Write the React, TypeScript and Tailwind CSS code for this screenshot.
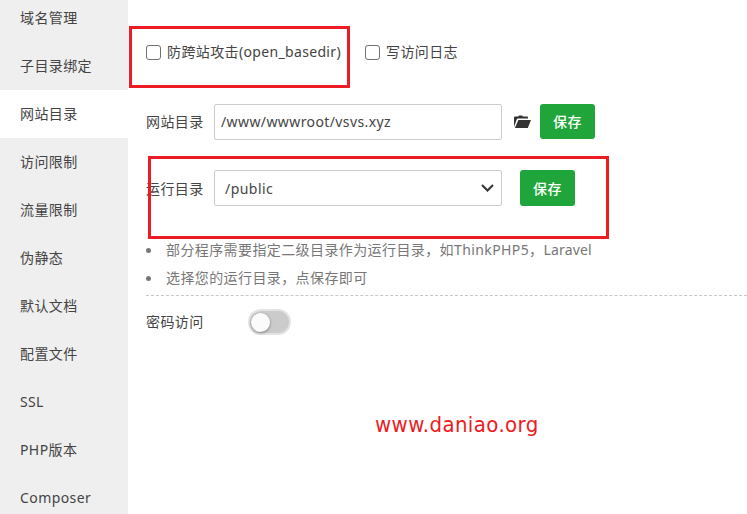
import React from 'react';

const menu: [string, string][] = [
  ['域名管理', ''],
  ['子目录绑定', ''],
  ['网站目录', ''],
  ['访问限制', ''],
  ['流量限制', ''],
  ['伪静态', ''],
  ['默认文档', ''],
  ['配置文件', ''],
  ['SSL', 'tracking-[0.3px]'],
  ['PHP版本', 'tracking-[0.4px]'],
  ['Composer', 'tracking-[0.42px]'],
];

function Sidebar() {
  return (
    <nav className="-mt-[6px] flex w-32 shrink-0 flex-col bg-[#efefef]">
      {menu.map(([label, tracking]) => (
        <a
          key={label}
          className={`flex h-12 shrink-0 items-center pl-5 ${label === '网站目录' ? 'bg-white' : ''}`}
        >
          <span className={tracking}>{label}</span>
        </a>
      ))}
    </nav>
  );
}

function Checkbox() {
  return <span className="size-[15px] shrink-0 rounded-[3px] border border-[#707070] bg-white" />;
}

function SaveButton({ height }: { height: string }) {
  return (
    <button className={`block w-[55px] rounded-[3px] bg-[#20a53a] font-medium text-white ${height}`}>保存</button>
  );
}

function Toggle() {
  return (
    <span className="ml-[44px] flex h-[26px] w-[43px] items-center rounded-full border-2 border-[#e3e3e3] bg-[#cbcbcb] pl-px">
      <span className="size-[19px] rounded-full bg-[#fbfbfb] shadow-[0_1px_3px_rgba(0,0,0,0.4)]" />
    </span>
  );
}

export default function App() {
  return (
    <div className="relative flex h-[514px] w-[747px] overflow-hidden bg-white font-['Noto_Sans','Noto_Sans_CJK_SC',sans-serif] text-[14px] font-normal leading-5 tracking-[0.4px] text-[#444]">
      <Sidebar />
      <main className="flex min-w-0 flex-1 flex-col pl-[18px] pt-[42px]">
        <div className="flex h-5 items-center">
          <Checkbox />
          <span className="ml-[6px] w-[198px] whitespace-nowrap">
            防跨站攻击<span className="tracking-[0.33px]">(open_basedir)</span>
          </span>
          <Checkbox />
          <span className="ml-[6px]">写访问日志</span>
        </div>

        <div className="mt-[42px] flex h-9 items-center">
          <span className="w-[68px]">网站目录</span>
          <div className="flex h-9 w-[288px] items-center rounded-[2px] border border-[#ccc] pl-[6px]">
            <span className="tracking-[0.4px]">/www/wwwroot/vsvs.xyz</span>
          </div>
          <svg className="ml-3 h-[14px] w-[17px]" viewBox="0 0 17 14" fill="#333">
            <path d="M0 12V2.4Q0 1.5.9 1.5H4L5.2.5H8L9 1.5H13.2Q14 1.5 14 2.4V3.4H4.2Q3.2 3.4 2.8 4.3Z" />
            <path d="M4.4 5H17L13.8 13H.9Z" />
          </svg>
          <div className="ml-[9px] self-start"><SaveButton height="h-[35px]" /></div>
        </div>

        <div className="mt-[30px] flex h-9 items-center">
          <span className="w-[68px] pt-px">运行目录</span>
          <div className="flex h-9 w-[288px] items-center justify-between rounded-[2px] border border-[#ccc] pl-[10px] pr-[7px]">
            <span className="pt-[2px] tracking-[0.45px]">/public</span>
            <svg className="h-2 w-[13px]" viewBox="0 0 13 8" fill="none" stroke="#333" strokeWidth="2">
              <path d="M1 1L6.5 6.5L12 1" />
            </svg>
          </div>
          <div className="ml-[18px]"><SaveButton height="h-9 pt-[2px]" /></div>
        </div>

        <ul className="mt-[30px] border-b border-dashed border-[#c8c8c8] pb-[3px] text-[#777]">
          <li className="flex h-7 items-center gap-[15px] whitespace-nowrap">
            <span className="size-[5px] rounded-full bg-[#777]" />
            <span>部分程序需要指定二级目录作为运行目录，如<span className="tracking-[0.4px]">ThinkPHP5</span>，<span className="tracking-[0.15px]">Laravel</span></span>
          </li>
          <li className="flex h-7 items-center gap-[15px]">
            <span className="size-[5px] rounded-full bg-[#777]" />
            <span>选择您的运行目录，点保存即可</span>
          </li>
        </ul>

        <div className="mt-[13px] flex h-[26px] items-center">
          <span className="w-[58px]">密码访问</span>
          <Toggle />
        </div>

        <p className="ml-[229px] mt-[76px] font-['DejaVu_Sans_Condensed','DejaVu_Sans',sans-serif] text-[22px] leading-7 tracking-[0.4px] text-[#ed1c24] [font-stretch:condensed]">
          www.daniao.org
        </p>
      </main>
      <div className="absolute left-[129px] top-[26px] h-[62px] w-[221px] border-3 border-[#ed1c24]" />
      <div className="absolute left-[148px] top-[156px] h-[83px] w-[461px] border-3 border-[#ed1c24]" />
    </div>
  );
}
